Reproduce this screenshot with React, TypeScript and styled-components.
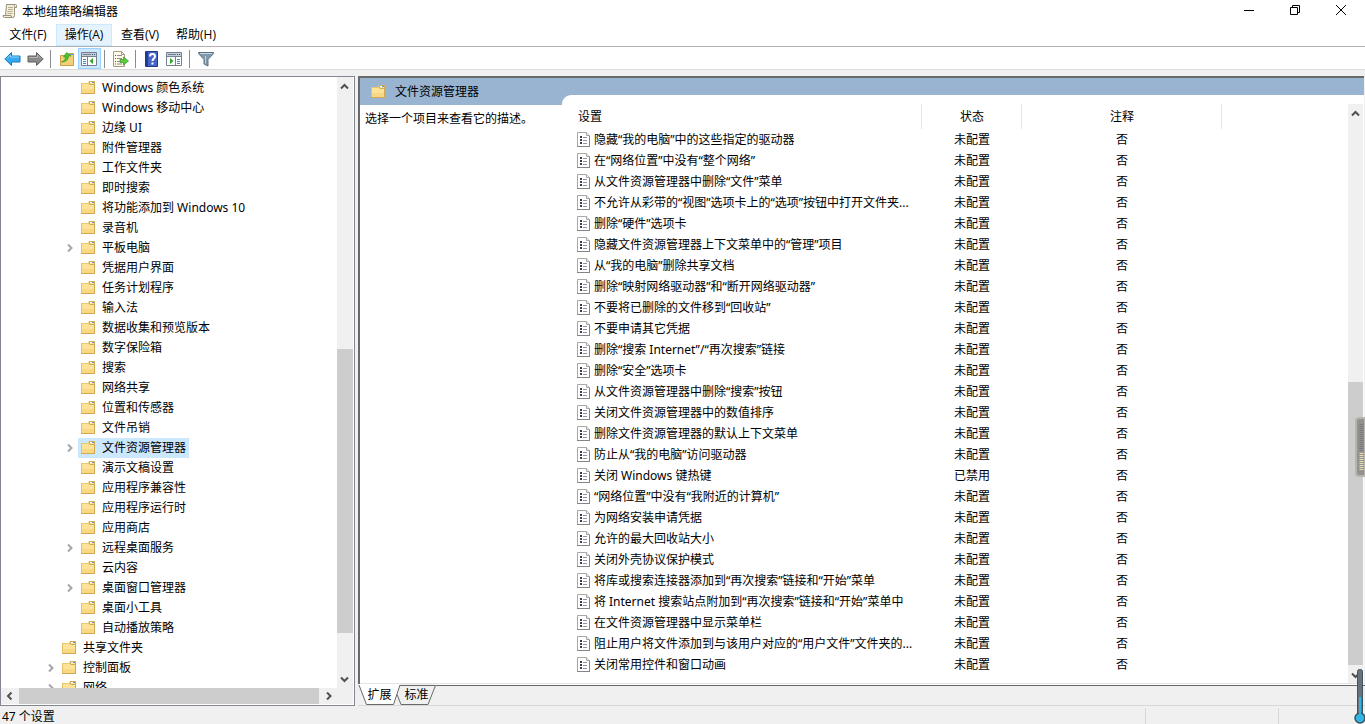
import React from "react";
import styled, { createGlobalStyle, css } from "styled-components";

const Global = createGlobalStyle`
  * { box-sizing: border-box; }
  html, body, #root { height: 100%; }
  body {
    margin: 0;
    overflow: hidden;
    background: #f0f0f0;
    color: #000;
    font: 12px/20px "Noto Sans", "Noto Sans CJK SC", sans-serif;
  }
  button { font: inherit; color: inherit; border: 0; background: none; padding: 0; }
  ul { list-style: none; margin: 0; padding: 0; }
  svg { display: block; flex: none; }
`;

const Window = styled.div`
  position: relative;
  height: 100vh;
  display: flex;
  flex-direction: column;
`;

const TitleBar = styled.header`
  display: flex;
  align-items: flex-start;
  height: 24px;
  padding: 3px 1px 0 2px;
  background: #fff;
`;
const Title = styled.h1`
  flex: 1;
  margin: 0 0 0 4px;
  font-size: 12px;
  font-weight: 400;
  line-height: 18px;
`;
const CaptionButton = styled.button`
  width: 46px;
  height: 14px;
  display: grid;
  place-items: center;
`;

const MenuBar = styled.nav`
  display: flex;
  height: 23px;
  background: #fff;
  border-bottom: 1px solid #b0b0b0;
`;
const MenuItem = styled.button<{ $hot?: boolean }>`
  width: 56px;
  height: 22px;
  border: 1px solid ${(p) => (p.$hot ? "#cce8ff" : "transparent")};
  background: ${(p) => (p.$hot ? "#e5f3ff" : "transparent")};
  font-family: "Open Sans", "Noto Sans CJK SC", sans-serif;
  line-height: 20px;
  white-space: nowrap;
`;

const ToolBar = styled.div`
  display: flex;
  align-items: center;
  height: 23px;
  padding: 1px 0 0 1px;
  background: #fff;
  border-bottom: 1px solid #dadada;
`;
const ToolButton = styled.button<{ $active?: boolean }>`
  width: 23px;
  height: 21px;
  display: grid;
  place-items: center;
  border: 1px solid transparent;
  ${(p) =>
    p.$active &&
    css`
      background: #cce8ff;
      border-color: #99d1ff;
    `}
`;
const ToolDivider = styled.span`
  width: 1px;
  height: 18px;
  margin: 0 4px 0 3px;
  background: #8c8c8c;
`;

const Workspace = styled.main`
  flex: 1;
  min-height: 0;
  display: flex;
  gap: 3px;
  padding-top: 6px;
`;

const TreePane = styled.section`
  flex: 0 0 26%;
  min-width: 0;
  display: grid;
  grid-template: minmax(0, 1fr) 17px / minmax(0, 1fr) 17px;
  background: #fff;
  border: 1px solid #828790;
`;
const Tree = styled.ul`
  min-height: 0;
  overflow: hidden;
  padding-top: 1px;
`;
const TreeItem = styled.li<{ $level: number }>`
  display: flex;
  align-items: center;
  height: 20px;
  padding-left: ${(p) => 24 + p.$level * 19}px;
`;
const Twisty = styled.button`
  width: 13px;
  height: 20px;
  margin-right: 2px;
  display: grid;
  place-items: center;
`;
const TreeLabel = styled.span<{ $selected?: boolean }>`
  display: flex;
  align-items: center;
  gap: 6px;
  height: 20px;
  padding: 0 3px 0 2px;
  white-space: nowrap;
  background: ${(p) => (p.$selected ? "#cce8ff" : "transparent")};
`;

const Scroller = styled.div<{ $horizontal?: boolean }>`
  flex: 0 0 16px;
  display: flex;
  flex-direction: ${(p) => (p.$horizontal ? "row" : "column")};
  min-width: 0;
  min-height: 0;
  background: #f0f0f0;
  border: 0 solid #fff;
  border-width: ${(p) => (p.$horizontal ? "0 0 1px" : "0 1px 0 0")};
`;
const ScrollArrow = styled.button`
  flex: 0 0 17px;
  display: grid;
  place-items: center;
`;
const ScrollSpace = styled.span<{ $size: number }>`
  flex: ${(p) => p.$size} 1 0;
`;
const ScrollThumb = styled.span<{ $size: number }>`
  flex: ${(p) => p.$size} 1 0;
  background: #cdcdcd;
`;
const ScrollCorner = styled.span`
  background: #f0f0f0;
  border: 0 solid #fff;
  border-width: 0 1px 1px 0;
`;

const DetailSide = styled.section`
  flex: 1;
  min-width: 0;
  display: flex;
  flex-direction: column;
`;
const DetailPane = styled.div`
  flex: 1;
  min-height: 0;
  display: flex;
  flex-direction: column;
  margin-right: 1px;
  background: #fff;
  border: 2px solid #696969;
  border-width: 2px 0 0 2px;
`;
const DetailTop = styled.div`
  height: 17px;
  background: #99b4d1;
`;
const DetailBody = styled.div`
  flex: 1;
  min-height: 0;
  display: flex;
  background: #99b4d1;
  border-bottom: 1px solid #e3e3e3;
`;
const Description = styled.aside`
  flex: 0 0 202px;
  display: flex;
  flex-direction: column;
`;
const FolderHeading = styled.h2`
  display: flex;
  align-items: center;
  gap: 9px;
  height: 27px;
  margin: -17px 0 0;
  padding-left: 10px;
  font-size: 12px;
  font-weight: 400;
`;
const DescriptionText = styled.p`
  flex: 1;
  margin: 0;
  padding: 4px 5px;
  background: #fff;
`;
const ListArea = styled.div`
  flex: 1;
  min-width: 0;
  display: flex;
  padding-top: 9px;
  background: #fff;
  border-top-left-radius: 9px;
`;
const ListClip = styled.div`
  flex: 1;
  min-width: 0;
  overflow: hidden;
  padding-left: 10px;
`;
const SettingTable = styled.table`
  width: 650px;
  table-layout: fixed;
  border-collapse: collapse;
`;
const HeadCell = styled.th<{ $width: number; $left?: boolean }>`
  width: ${(p) => p.$width}px;
  height: 25px;
  padding: 0 0 0 ${(p) => (p.$left ? 6 : 0)}px;
  border-right: 1px solid #e5e5e5;
  font-weight: 400;
  text-align: ${(p) => (p.$left ? "left" : "center")};
`;
const Cell = styled.td`
  height: 21px;
  padding: 0;
  text-align: center;
`;
const SettingName = styled.div`
  display: flex;
  align-items: center;
  gap: 3px;
  padding-left: 5px;
  line-height: 21px;
  white-space: nowrap;
`;

const TabStrip = styled.div`
  display: flex;
  height: 22px;
  border-bottom: 1px solid #d9d9d9;
`;
const TabRest = styled.span`
  flex: 1;
  height: 2px;
  background: #696969;
  border-top: 1px solid #fff;
`;
const Tab = styled.button<{ $behind?: boolean }>`
  position: relative;
  width: ${(p) => (p.$behind ? 40 : 42)}px;
  height: 21px;
  margin-left: ${(p) => (p.$behind ? -4 : 0)}px;
  padding-left: 1px;
  line-height: 22px;
`;
const TabShape = styled.svg`
  position: absolute;
  inset: 0;
`;
const TabText = styled.span`
  position: relative;
`;

const StatusBar = styled.footer`
  display: flex;
  height: 18px;
  padding-left: 2px;
  line-height: 22px;
`;
const StatusMain = styled.span`
  flex: 1;
`;
const StatusCell = styled.span<{ $width: number }>`
  width: ${(p) => p.$width}px;
  margin-top: 2px;
  border-left: 1px solid #d7d7d7;
`;

const Gadget = styled.div<{ $bottom: number }>`
  position: absolute;
  right: 0;
  bottom: ${(p) => p.$bottom}px;
`;

const FolderIcon = () => (
  <svg width="16" height="16" viewBox="0 0 16 16">
    <path d="M1 3h7l1-2h6v13H1z" fill="#e9c873" />
    <path d="M9.500 1.500h5v3h-5z" fill="#f7e3a8" stroke="#d0ab5a" />
    <path d="M10 2.500h2" stroke="#fff" />
    <path d="M12 2.500h2" stroke="#4a9ae0" />
    <path d="M1 4h8l1 1h5v9H1z" fill="#fde398" />
    <path d="M1 9h14v5H1z" fill="#f8d882" />
    <path d="M1 13.500h14M14.500 4v10" stroke="#d0a955" fill="none" />
    <path d="M1.500 3v10" stroke="#e3c06a" />
  </svg>
);

const SettingIcon = () => (
  <svg width="14" height="16" viewBox="0 1 14 16">
    <path d="M.5 1.500h9l3 3v11H.5z" fill="#fff" stroke="#a8a8a8" />
    <path d="M9.500 1.500v3h3" fill="#eee" stroke="#a5a5a5" />
    <path d="M0 15.500h13M12.500 5v11" stroke="#858585" />
    <path d="M3 5h2v2H3zM3 8h2v2H3zM3 11h2v2H3z" fill="#3c3c46" />
    <path d="M6 6.500H10M6 9.500H10M6 12.500H10" stroke="#8f8fa5" />
  </svg>
);

const paths = {
  up: "M1 6.500 4.500 3 8 6.500",
  down: "M1 2.500 4.500 6 8 2.500",
  left: "M6.500 0.500 3 4 6.500 7.500",
  right: "M3 0.500 6.500 4 3 7.500",
};
const Chevron = ({ dir, color = "#505050" }: { dir: keyof typeof paths; color?: string }) => (
  <svg width="9" height="8" viewBox="0 0 9 8">
    <path d={paths[dir]} fill="none" stroke={color} strokeWidth="2" />
  </svg>
);

const ScrollIcon = () => (
  <svg width="16" height="16" viewBox="0 0 16 16">
    <path d="M4.500 1.500h9q1 0 1 1v2h-2v8q0 2-2 2h-8q-1.500 0-1.500-2h2.500z" fill="#f5efd8" stroke="#96907c" />
    <path d="M12.500 4V2.500M3.500 12.500h5.500q0 2 1.500 2" fill="none" stroke="#96907c" />
    <path d="M6 4.500h5M6 6.500h5M5.500 8.500h5M5.500 10.500h5" stroke="#b8ae92" />
  </svg>
);

const Arrow = ({ back }: { back?: boolean }) => (
  <svg width="17" height="16" viewBox="0 0 17 16">
    <path
      d={back ? "M.8 8 7.500 1.500v3.500h8.500v6H7.500v3.500z" : "M16.200 8 9.500 1.500v3.500H1v6h8.500v3.500z"}
      fill={back ? "#35aaf0" : "#8a8a8a"}
      stroke={back ? "#1879bd" : "#606060"}
    />
    <path d={back ? "M3 7.500 6.500 4v2H15" : "M2 6.500h8.500V4l3.500 3.500"} fill="none" stroke={back ? "#86d3fb" : "#b5b5b5"} />
  </svg>
);

const UpFolder = () => (
  <svg width="16" height="16" viewBox="0 0 16 16">
    <path d="M1.500 4.500h7l1-2h5v12h-13z" fill="#f3cf78" stroke="#c99f4a" />
    <path d="M11 3.500h3" stroke="#5ba2dd" />
    <path d="M2.500 11c3-1 4-3 4-5H4.500l3-4.500L12 5h-2.500c0 4-3 6-7 6z" fill="#4cc12f" stroke="#2d9418" strokeWidth=".6" />
  </svg>
);

const PaneIcon = ({ left }: { left?: boolean }) => (
  <svg width="17" height="16" viewBox="0 0 17 16">
    <path d="M.5 1.500h15v13H.5z" fill="#fff" stroke="#758091" />
    <path d="M1 2h14v3H1z" fill="#c4cdd9" />
    <path d="M1 5.500h14M2 3.500h8" stroke="#758091" />
    <path d="M11 3.500h1M13 3.500h1" stroke="#365880" />
    <path d={left ? "M6.500 6v8" : "M9.500 6v8"} stroke="#758091" />
    <path d={left ? "M2 8.500h3M2 10.500h3M2 12.500h3" : "M11 8.500h3M11 10.500h3M11 12.500h3"} stroke="#4b7fc0" />
    <path d={left ? "M12 7v6L8.500 10z" : "M4 7v6l3.500-3z"} fill="#32a529" />
  </svg>
);

const ExportIcon = () => (
  <svg width="17" height="16" viewBox="0 0 17 16">
    <path d="M1.500.5h8l3 3v12h-11z" fill="#fffbe8" stroke="#a49d85" />
    <path d="M9.500.5v3h3" fill="none" stroke="#a49d85" />
    <path d="M3 4.500h1M3 7.500h1M3 10.500h1M3 13h1" stroke="#555" />
    <path d="M5 4.500h5M5 7.500h5M5 10.500h5M5 13h5" stroke="#92889f" />
    <path d="M8 8.500h3.500V6l5 4-5 4v-2.500H8z" fill="#5ccc3b" stroke="#37972a" strokeWidth=".7" />
  </svg>
);

const HelpIcon = () => (
  <svg width="14" height="16" viewBox="0 0 14 16">
    <path d="M.5.500h12v15H.5z" fill="#4566c8" stroke="#203a84" />
    <path d="M1 1h2v14H1z" fill="#203d94" />
    <path d="M5 5.500c0-3.300 5-3.300 5 0 0 2-2.500 2-2.500 4.500M7.500 11.500v2" fill="none" stroke="#fff" strokeWidth="2" />
  </svg>
);

const FilterIcon = () => (
  <svg width="16" height="16" viewBox="0 0 16 16">
    <path d="M.5 1.500h15v1L10 8.500v6.500l-4-2v-4.500l-5.500-6z" fill="#8299ac" stroke="#5b7084" />
    <path d="M2 2.500h12" stroke="#c6d5e1" />
    <path d="M7.500 5v7.500" stroke="#c1d2df" />
  </svg>
);

const folders: { name: string; level?: number; open?: boolean; selected?: boolean }[] = [
  { name: "Windows 颜色系统" },
  { name: "Windows 移动中心" },
  { name: "边缘 UI" },
  { name: "附件管理器" },
  { name: "工作文件夹" },
  { name: "即时搜索" },
  { name: "将功能添加到 Windows 10" },
  { name: "录音机" },
  { name: "平板电脑", open: true },
  { name: "凭据用户界面" },
  { name: "任务计划程序" },
  { name: "输入法" },
  { name: "数据收集和预览版本" },
  { name: "数字保险箱" },
  { name: "搜索" },
  { name: "网络共享" },
  { name: "位置和传感器" },
  { name: "文件吊销" },
  { name: "文件资源管理器", open: true, selected: true },
  { name: "演示文稿设置" },
  { name: "应用程序兼容性" },
  { name: "应用程序运行时" },
  { name: "应用商店" },
  { name: "远程桌面服务", open: true },
  { name: "云内容" },
  { name: "桌面窗口管理器", open: true },
  { name: "桌面小工具" },
  { name: "自动播放策略" },
  { name: "共享文件夹", level: 1 },
  { name: "控制面板", level: 1, open: true },
  { name: "网络", level: 1, open: true },
];

const settings = [
  "隐藏“我的电脑”中的这些指定的驱动器",
  "在“网络位置”中没有“整个网络”",
  "从文件资源管理器中删除“文件”菜单",
  "不允许从彩带的“视图”选项卡上的“选项”按钮中打开文件夹...",
  "删除“硬件”选项卡",
  "隐藏文件资源管理器上下文菜单中的“管理”项目",
  "从“我的电脑”删除共享文档",
  "删除“映射网络驱动器”和“断开网络驱动器”",
  "不要将已删除的文件移到“回收站”",
  "不要申请其它凭据",
  "删除“搜索 Internet”/“再次搜索”链接",
  "删除“安全”选项卡",
  "从文件资源管理器中删除“搜索”按钮",
  "关闭文件资源管理器中的数值排序",
  "删除文件资源管理器的默认上下文菜单",
  "防止从“我的电脑”访问驱动器",
  "关闭 Windows 键热键",
  "“网络位置”中没有“我附近的计算机”",
  "为网络安装申请凭据",
  "允许的最大回收站大小",
  "关闭外壳协议保护模式",
  "将库或搜索连接器添加到“再次搜索”链接和“开始”菜单",
  "将 Internet 搜索站点附加到“再次搜索”链接和“开始”菜单中",
  "在文件资源管理器中显示菜单栏",
  "阻止用户将文件添加到与该用户对应的“用户文件”文件夹的...",
  "关闭常用控件和窗口动画",
];
const disabledSetting = "关闭 Windows 键热键";

const ScrollBar = ({ horizontal, parts }: { horizontal?: boolean; parts: [number, number, number] }) => (
  <Scroller $horizontal={horizontal}>
    <ScrollArrow aria-label={horizontal ? "向左滚动" : "向上滚动"}>
      <Chevron dir={horizontal ? "left" : "up"} />
    </ScrollArrow>
    <ScrollSpace $size={parts[0]} />
    <ScrollThumb $size={parts[1]} />
    <ScrollSpace $size={parts[2]} />
    <ScrollArrow aria-label={horizontal ? "向右滚动" : "向下滚动"}>
      <Chevron dir={horizontal ? "right" : "down"} />
    </ScrollArrow>
  </Scroller>
);

export default function App() {
  return (
    <Window>
      <Global />
      <TitleBar>
        <ScrollIcon />
        <Title>本地组策略编辑器</Title>
        <CaptionButton aria-label="最小化">
          <svg width="10" height="10"><path d="M0 5.500h10" stroke="#000" /></svg>
        </CaptionButton>
        <CaptionButton aria-label="还原">
          <svg width="10" height="10"><path d="M.5 2.500h7v7h-7zM2.500 2.500v-2h7v7h-2" fill="none" stroke="#000" /></svg>
        </CaptionButton>
        <CaptionButton aria-label="关闭">
          <svg width="10" height="10"><path d="M0 0 10 10M10 0 0 10" stroke="#000" /></svg>
        </CaptionButton>
      </TitleBar>
      <MenuBar>
        <MenuItem>文件(F)</MenuItem>
        <MenuItem $hot>操作(A)</MenuItem>
        <MenuItem>查看(V)</MenuItem>
        <MenuItem>帮助(H)</MenuItem>
      </MenuBar>
      <ToolBar>
        <ToolButton aria-label="后退"><Arrow back /></ToolButton>
        <ToolButton aria-label="前进"><Arrow /></ToolButton>
        <ToolDivider />
        <ToolButton aria-label="向上"><UpFolder /></ToolButton>
        <ToolButton aria-label="显示控制台树" $active><PaneIcon left /></ToolButton>
        <ToolDivider />
        <ToolButton aria-label="导出列表"><ExportIcon /></ToolButton>
        <ToolDivider />
        <ToolButton aria-label="帮助"><HelpIcon /></ToolButton>
        <ToolButton aria-label="显示操作窗格"><PaneIcon /></ToolButton>
        <ToolDivider />
        <ToolButton aria-label="筛选器"><FilterIcon /></ToolButton>
      </ToolBar>
      <Workspace>
        <TreePane>
          <Tree>
            {folders.map((f) => (
              <TreeItem key={f.name} $level={f.level ? 1 : 2}>
                {f.open ? (
                  <Twisty aria-label="展开"><Chevron dir="right" color="#a6a6a6" /></Twisty>
                ) : (
                  <Twisty as="span" />
                )}
                <TreeLabel $selected={f.selected}>
                  <FolderIcon />
                  {f.name}
                </TreeLabel>
              </TreeItem>
            ))}
          </Tree>
          <ScrollBar parts={[255, 283, 38]} />
          <ScrollBar horizontal parts={[1, 299, 1]} />
          <ScrollCorner />
        </TreePane>
        <DetailSide>
          <DetailPane>
            <DetailTop />
            <DetailBody>
              <Description>
                <FolderHeading><FolderIcon />文件资源管理器</FolderHeading>
                <DescriptionText>选择一个项目来查看它的描述。</DescriptionText>
              </Description>
              <ListArea>
                <ListClip>
                  <SettingTable>
                    <thead>
                      <tr>
                        <HeadCell $width={350} $left>设置</HeadCell>
                        <HeadCell $width={100}>状态</HeadCell>
                        <HeadCell $width={200}>注释</HeadCell>
                      </tr>
                    </thead>
                    <tbody>
                      {settings.map((s) => (
                        <tr key={s}>
                          <Cell><SettingName><SettingIcon />{s}</SettingName></Cell>
                          <Cell>{s === disabledSetting ? "已禁用" : "未配置"}</Cell>
                          <Cell>否</Cell>
                        </tr>
                      ))}
                    </tbody>
                  </SettingTable>
                </ListClip>
                <ScrollBar parts={[261, 283, 1]} />
              </ListArea>
            </DetailBody>
          </DetailPane>
          <TabStrip>
            <Tab>
              <TabShape width="42" height="21">
                <path d="M1 0 8.500 20.500h27.500L42 1V0z" fill="#fff" />
                <path d="M1 1 8.500 20.500h27L42 1" fill="none" stroke="#696969" />
              </TabShape>
              <TabText>扩展</TabText>
            </Tab>
            <Tab $behind>
              <TabShape width="40" height="21">
                <path d="M1 10.500 5 20.500h27L39.500 1.500H4" fill="none" stroke="#696969" />
              </TabShape>
              <TabText>标准</TabText>
            </Tab>
            <TabRest />
          </TabStrip>
        </DetailSide>
      </Workspace>
      <StatusBar>
        <StatusMain>47 个设置</StatusMain>
        <StatusCell $width={133} />
        <StatusCell $width={87} />
      </StatusBar>
      <Gadget $bottom={247}>
        <svg width="10" height="60" viewBox="0 0 10 60">
          <path d="M10 1H4Q1 1 1 4v52q0 3 3 3h6z" fill="#929292" stroke="#b9b5ad" strokeWidth="2" />
          <path d="M6.500 7v27" stroke="#777" strokeWidth="4" strokeDasharray="1 1" />
          <path d="M6.500 36v18" stroke="#e8deb0" strokeWidth="4" strokeDasharray="1 1" />
        </svg>
      </Gadget>
      <Gadget $bottom={0}>
        <svg width="11" height="56" viewBox="0 0 11 56">
          <rect x="3.500" y="1.500" width="5" height="48" rx="2" fill="#64747f" stroke="#43525c" />
          <circle cx="6" cy="50" r="5" fill="#32b5e5" stroke="#40505b" strokeWidth="1.500" />
          <path d="M6 29v20" stroke="#32b5e5" strokeWidth="2" />
        </svg>
      </Gadget>
    </Window>
  );
}
